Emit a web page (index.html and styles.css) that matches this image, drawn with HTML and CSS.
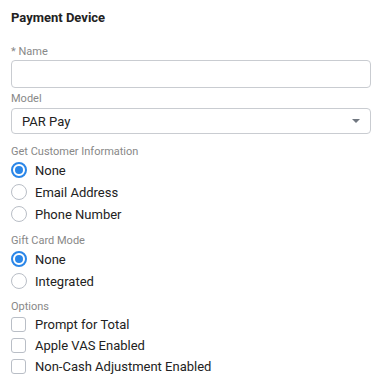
FILE: index.html
```html
<!DOCTYPE html>
<html lang="en">
<head>
    <meta charset="UTF-8">
    <meta name="viewport" content="width=device-width, initial-scale=1.0">
    <title>Payment Device</title>
    <link rel="stylesheet" href="styles.css">
</head>
<body>
    <div class="panel">
        <h2 class="panel-title">Payment Device</h2>

        <div class="field">
            <label class="field-label">* Name</label>
            <input class="text-input" type="text">
        </div>

        <div class="field">
            <label class="field-label">Model</label>
            <div class="select">
                <span>PAR Pay</span>
                <span class="select-arrow"></span>
            </div>
        </div>

        <div class="group">
            <div class="field-label">Get Customer Information</div>
            <label class="option"><span class="radio checked"></span>None</label>
            <label class="option"><span class="radio"></span>Email Address</label>
            <label class="option"><span class="radio"></span>Phone Number</label>
        </div>

        <div class="group">
            <div class="field-label">Gift Card Mode</div>
            <label class="option"><span class="radio checked"></span>None</label>
            <label class="option"><span class="radio"></span>Integrated</label>
        </div>

        <div class="group options">
            <div class="field-label">Options</div>
            <label class="option"><span class="checkbox"></span>Prompt for Total</label>
            <label class="option"><span class="checkbox"></span>Apple VAS Enabled</label>
            <label class="option"><span class="checkbox"></span>Non-Cash Adjustment Enabled</label>
        </div>
    </div>
</body>
</html>
```

FILE: styles.css
```css
body {
    margin: 0;
    font-family: Roboto, 'Liberation Sans', sans-serif;
    background-color: #fff;
    color: #333;
}
.panel {
    padding: 10px 12px 0 11px;
}
.panel-title {
    font-size: 13px;
    font-weight: bold;
    color: #222;
    margin: 0 0 19px 0;
    line-height: 16px;
}
.field {
    display: flex;
    flex-direction: column;
    margin-bottom: 4px;
}
.field-label {
    font-size: 11px;
    color: #888;
    line-height: 14px;
    margin-bottom: 1px;
}
.text-input {
    box-sizing: border-box;
    height: 28px;
    border: 1px solid #c9ccd1;
    border-radius: 4px;
    margin: 0;
    padding: 0 10px;
    font-family: inherit;
    font-size: 13px;
}
.select {
    box-sizing: border-box;
    height: 26px;
    margin-top: 1px;
    border: 1px solid #c9ccd1;
    border-radius: 4px;
    display: flex;
    align-items: center;
    justify-content: space-between;
    padding: 0 10px 0 10px;
    font-size: 13px;
    color: #222;
}
.select-arrow {
    width: 0;
    height: 0;
    border-left: 4px solid transparent;
    border-right: 4px solid transparent;
    border-top: 4px solid #707780;
}
.group {
    margin-top: 11px;
    display: flex;
    flex-direction: column;
}
.group + .group {
    margin-top: 9px;
}
.group.options {
    margin-top: 8px;
}
.group .field-label {
    margin-bottom: 0;
}
.option {
    display: flex;
    align-items: center;
    height: 22px;
    font-size: 13px;
    color: #222;
}
.radio {
    box-sizing: border-box;
    width: 16px;
    height: 16px;
    border: 1px solid #b9bec6;
    border-radius: 50%;
    margin-right: 8px;
    position: relative;
}
.radio.checked {
    border: 2px solid #2a86e8;
}
.radio.checked::after {
    content: '';
    position: absolute;
    left: 2px;
    top: 2px;
    width: 8px;
    height: 8px;
    border-radius: 50%;
    background-color: #2a86e8;
}
.options .option {
    height: 21px;
}
.checkbox {
    box-sizing: border-box;
    width: 15px;
    height: 15px;
    border: 1px solid #b9bec6;
    border-radius: 3px;
    margin-right: 9px;
}
```
